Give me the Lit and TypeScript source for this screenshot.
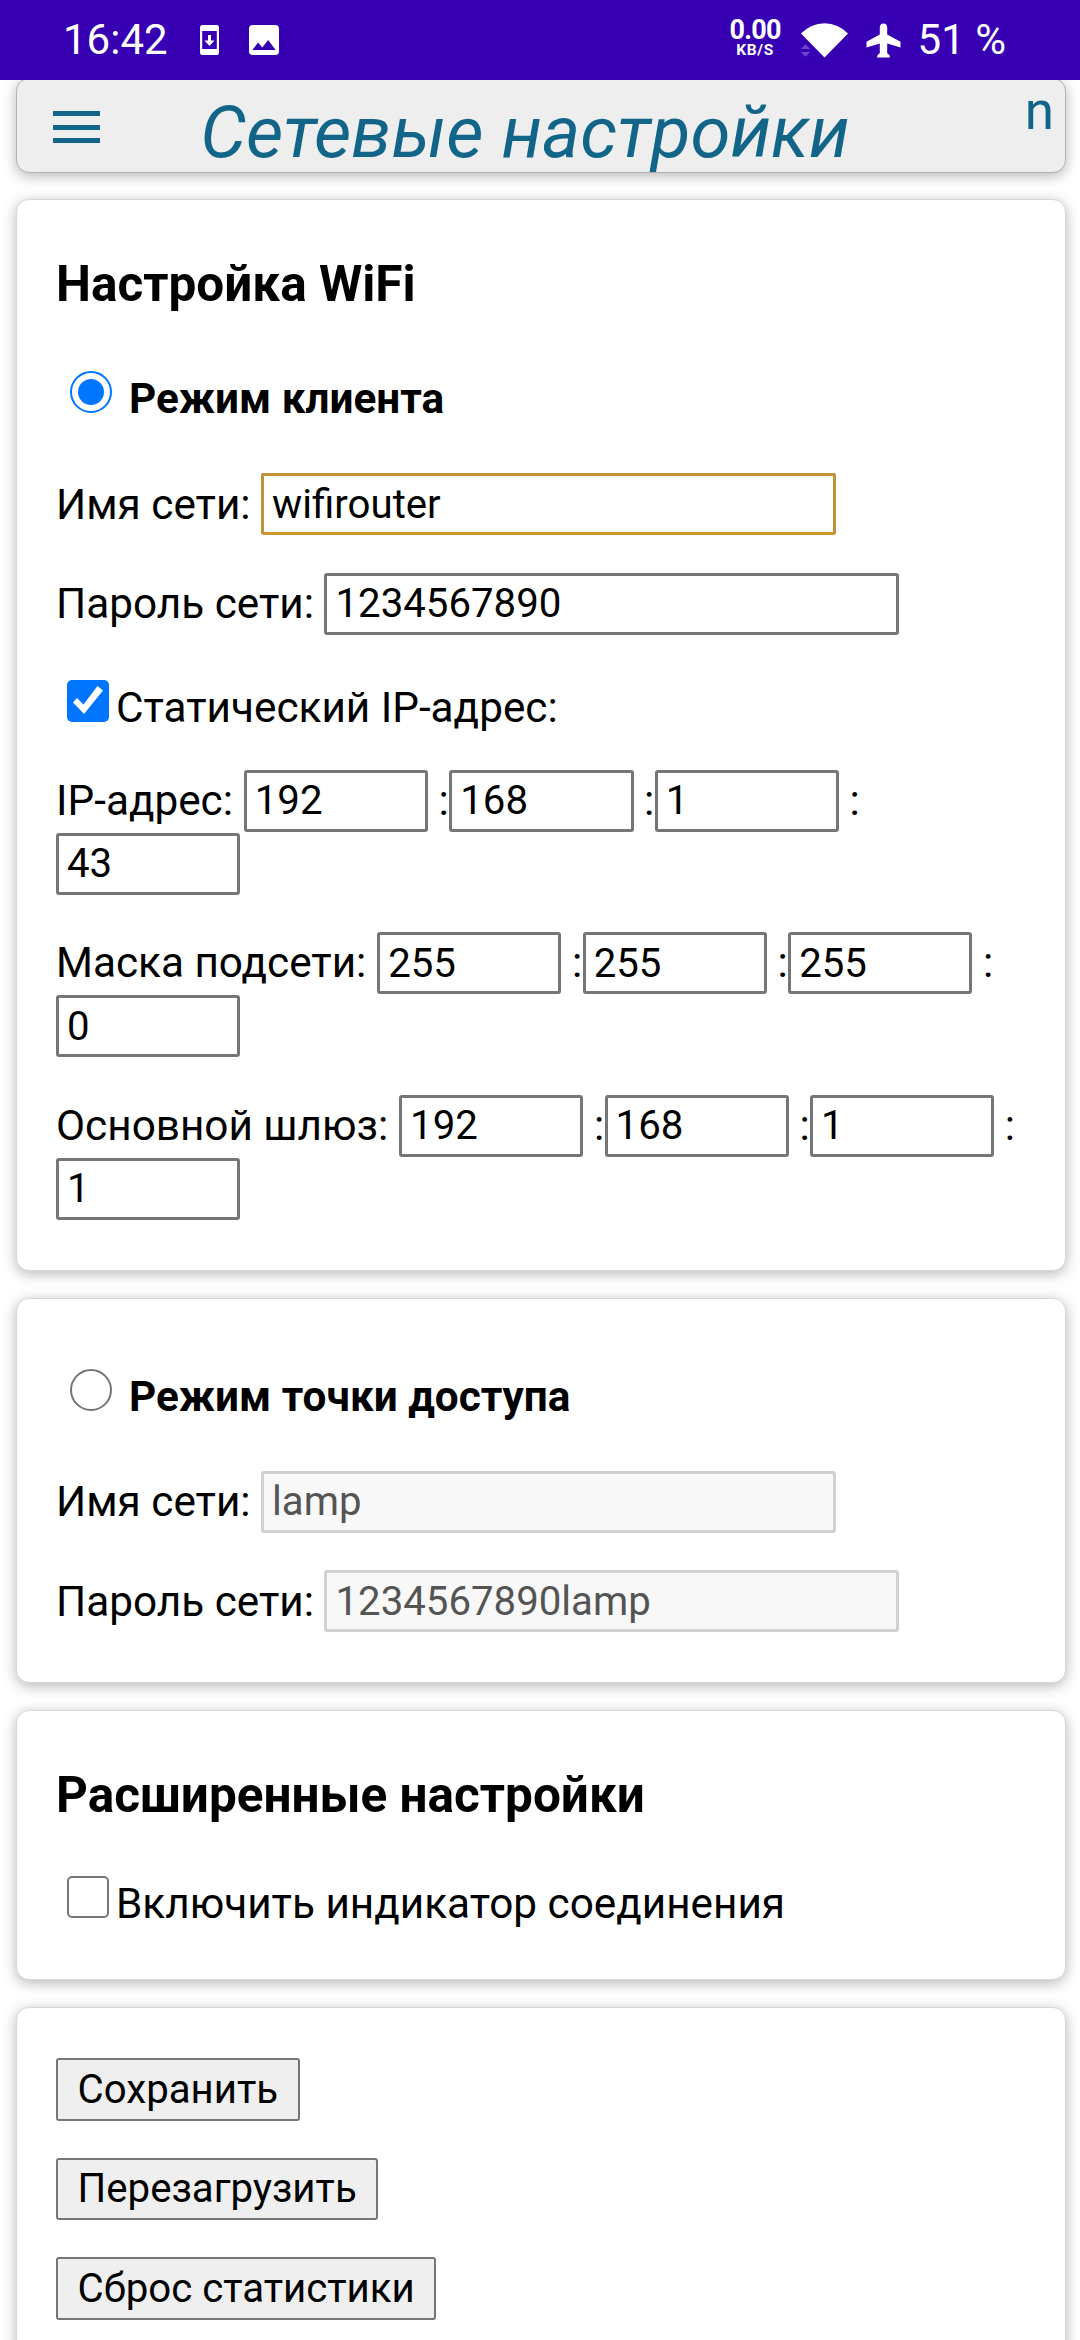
import { LitElement, html, css, nothing } from "lit";
import { customElement, property } from "lit/decorators.js";

@customElement("status-bar")
class StatusBar extends LitElement {
  static styles = css`
    :host {
      display: flex;
      box-sizing: border-box;
      height: 80px;
      padding: 0 74px 0 63px;
      background: #3700b3;
      color: #fff;
      font-size: 42px;
      line-height: 79px;
      position: relative;
      z-index: 1;
    }
    svg {
      display: block;
      flex: none;
      fill: currentColor;
    }
    .clock {
      width: 137px;
    }
    .phone {
      margin: 25px 30px 0 0;
    }
    .photo {
      margin-top: 25px;
    }
    .speed {
      display: flex;
      flex-direction: column;
      align-items: center;
      width: 51px;
      margin-left: auto;
      padding-top: 17px;
      font-weight: 700;
    }
    .rate {
      font-size: 27px;
      line-height: 26px;
      letter-spacing: -0.8px;
    }
    .unit {
      font-size: 15.5px;
      line-height: 14px;
      letter-spacing: 0.7px;
    }
    .wifi {
      margin: 23px 18px 0 20px;
    }
    .faint {
      fill: #7347cd;
    }
    .plane {
      margin: 23px 17px 0 0;
    }
  `;
  render() {
    return html`
      <span class="clock">16:42</span>
      <svg class="phone" width="19" height="30" viewBox="0 0 19 30">
        <path
          fill-rule="evenodd"
          d="M2.5 0h14A2.5 2.5 0 0 1 19 2.5v25a2.5 2.5 0 0 1-2.5 2.5h-14A2.5 2.5 0 0 1 0 27.5v-25A2.5 2.5 0 0 1 2.5 0zM2.2 6v18h14.6V6zM8 10h3v5.5h3.5l-5 5.5-5-5.5H8z"
        />
      </svg>
      <svg class="photo" width="30" height="30" viewBox="3 3 18 18">
        <path
          d="M21 19V5c0-1.1-.9-2-2-2H5c-1.1 0-2 .9-2 2v14c0 1.1.9 2 2 2h14c1.1 0 2-.9 2-2zM8.5 13.5l2.5 3.01L14.5 12l4.5 6H5l3.5-4.5z"
        />
      </svg>
      <span class="speed">
        <span class="rate">0.00</span>
        <span class="unit">KB/S</span>
      </span>
      <svg class="wifi" width="47" height="35" viewBox="0 0 47 35">
        <path d="M0 10.5A32 32 0 0 1 47 10.5L23.5 34.5z" />
        <path class="faint" d="M0 26h9L4.5 21.3zM0 29h9L4.5 33.8z" />
      </svg>
      <svg class="plane" width="35" height="35" viewBox="0 0 35 35">
        <path
          d="M17.5.5c2.2 0 3.7 1.6 3.7 3.7v7.3L34.5 18.8v5.6l-13.3-3.9v9.2c0 1.5 2.6 1.6 2.6 3.2v1.6H11.2v-1.6c0-1.6 2.6-1.7 2.6-3.2v-9.2L.5 24.4v-5.6l13.3-7.3V4.2c0-2.1 1.5-3.7 3.7-3.7z"
        />
      </svg>
      <span>51 %</span>
    `;
  }
}

@customElement("page-header")
class PageHeader extends LitElement {
  static styles = css`
    :host {
      display: grid;
      grid-template-columns: 130px 1fr 162px;
      box-sizing: border-box;
      height: 95px;
      margin: -2px 14px 0 16px;
      border: 1px solid #b0b2b3;
      border-radius: 13px;
      background: #eee;
      box-shadow: 0 3px 14px rgba(0, 0, 0, 0.29);
      color: #126589;
    }
    .menu {
      display: flex;
      flex-direction: column;
      gap: 8.5px;
      width: 47px;
      padding: 32px 0 0 36px;
    }
    .bar {
      height: 5px;
      background: #126589;
    }
    .title {
      margin: 0;
      font-size: 72.5px;
      font-style: italic;
      font-weight: 400;
      line-height: 108px;
      text-align: center;
      white-space: nowrap;
    }
    .tail {
      font-size: 53px;
      line-height: 64px;
      padding-right: 11px;
      text-align: right;
    }
  `;
  render() {
    return html`
      <div class="menu">
        <div class="bar"></div>
        <div class="bar"></div>
        <div class="bar"></div>
      </div>
      <h1 class="title">Сетевые настройки</h1>
      <div class="tail">n</div>
    `;
  }
}

/** A labelled single-line text field. */
@customElement("text-row")
class TextRow extends LitElement {
  static styles = css`
    :host {
      display: flex;
      align-items: center;
      height: 62px;
      line-height: 61px;
      gap: 10.5px;
    }
    .field {
      box-sizing: border-box;
      width: 575px;
      height: 62px;
      margin: 0;
      padding: 0 8px;
      border: 3px solid #767676;
      border-radius: 3px;
      outline: none;
      background: #fff;
      color: #000;
      font: inherit;
      font-size: 40.2px;
      line-height: 56px;
    }
    .active {
      border-color: #c2923a;
      border-bottom-color: #d1952a;
    }
    .field:disabled {
      border-color: #d1d1d1;
      background: #f8f8f8;
      color: #545454;
    }
  `;
  @property() label = "";
  @property() value = "";
  @property({ type: Boolean }) active = false;
  @property({ type: Boolean }) disabled = false;
  render() {
    return html`
      <span>${this.label}</span>
      <input
        class="field ${this.active ? "active" : ""}"
        type="text"
        .value=${this.value}
        ?disabled=${this.disabled}
      />
    `;
  }
}

/** Four octets; the last one wraps onto its own line. */
@customElement("octet-row")
class OctetRow extends LitElement {
  static styles = css`
    :host {
      display: flex;
      flex-wrap: wrap;
      line-height: 61px;
      row-gap: 0.5px;
    }
    .label {
      margin-right: 10.8px;
    }
    .field {
      box-sizing: border-box;
      width: 184.3px;
      height: 62px;
      margin: 0;
      padding: 0 8px;
      border: 3px solid #767676;
      border-radius: 3px;
      background: #fff;
      color: #000;
      font: inherit;
      font-size: 40.2px;
      line-height: 56px;
    }
    .colon {
      width: 10.7px;
      padding-left: 10.5px;
    }
    .break {
      flex-basis: 100%;
    }
  `;
  @property() label = "";
  @property({ type: Array }) octets: string[] = [];
  render() {
    const last = this.octets.length - 1;
    return html`
      <span class="label">${this.label}</span>
      ${this.octets.map(
        (octet, i) => html`
          ${i === last ? html`<span class="break"></span>` : nothing}
          <input class="field" type="text" .value=${octet} />
          ${i < last ? html`<span class="colon">:</span>` : nothing}
        `
      )}
    `;
  }
}

@customElement("app-root")
class AppRoot extends LitElement {
  static styles = css`
    :host {
      display: block;
      height: 2340px;
      overflow: hidden;
      background: #fff;
      color: #000;
      font-family: Roboto, "Liberation Sans", sans-serif;
      font-size: 42.3px;
    }
    .card {
      display: flex;
      flex-direction: column;
      box-sizing: border-box;
      margin: 26px 14px 0 16px;
      padding: 0 39px 50px;
      border: 1px solid #d8d8d8;
      border-radius: 13px;
      background: #fff;
      box-shadow: 0 3px 14px rgba(0, 0, 0, 0.29);
    }
    .heading {
      margin: 51px 0 0;
      font-size: 49.5px;
      font-weight: 700;
      line-height: 66px;
    }
    .choice {
      display: flex;
      align-items: flex-start;
      height: 50px;
      line-height: 56px;
    }
    .mode {
      padding-left: 14px;
      gap: 17px;
      font-weight: 700;
    }
    .option {
      padding-left: 11px;
      gap: 7px;
    }
    .toggle {
      appearance: none;
      flex: none;
      box-sizing: border-box;
      width: 42px;
      height: 42px;
      margin: 0;
      border: 2.5px solid #767676;
      background: #fff;
    }
    .radio {
      border-radius: 50%;
      padding: 6px;
    }
    .radio:checked {
      border-color: #0075ff;
      background: #0075ff content-box;
    }
    .check {
      border-radius: 5px;
    }
    .check:checked {
      border: 0;
      background: #0075ff;
    }
    .check:checked::before {
      content: "";
      display: block;
      width: 42px;
      height: 42px;
      background: #fff;
      clip-path: polygon(6px 23px, 10px 18.5px, 16.5px 25px, 30.5px 6.5px, 36px 11px, 17px 34.5px);
    }
    .label-text {
      height: 50px;
    }
    .client-mode { margin-top: 54px; }
    .client-name { margin-top: 52px; }
    .gap { margin-top: 37.5px; }
    .static-ip { margin-top: 45px; }
    .address { margin-top: 40px; }
    .octets { margin-top: 37.5px; }
    .point-mode { margin-top: 70px; }
    .indicator { margin-top: 48px; }
    .point { margin-top: 27px; }
    .advanced { padding-bottom: 53px; }
    .actions {
      align-items: flex-start;
      gap: 37px;
      padding-top: 50px;
    }
    .button {
      flex: none;
      box-sizing: border-box;
      height: 62.5px;
      margin: 0;
      padding: 1px 19.6px 0;
      border: 2.5px solid #767676;
      border-radius: 3px;
      background: #efefef;
      color: #000;
      font: inherit;
      font-size: 40.2px;
      line-height: 56px;
    }
  `;
  render() {
    return html`
      <status-bar></status-bar>
      <page-header></page-header>

      <section class="card">
        <h2 class="heading">Настройка WiFi</h2>
        <label class="choice mode client-mode">
          <input class="toggle radio" type="radio" name="mode" checked />
          <span class="label-text">Режим клиента</span>
        </label>
        <text-row class="client-name" label="Имя сети:" value="wifirouter" active></text-row>
        <text-row class="gap" label="Пароль сети:" value="1234567890"></text-row>
        <label class="choice option static-ip">
          <input class="toggle check" type="checkbox" checked />
          <span class="label-text">Статический IP-адрес:</span>
        </label>
        <octet-row class="address" label="IP-адрес:" .octets=${["192", "168", "1", "43"]}></octet-row>
        <octet-row class="octets" label="Маска подсети:" .octets=${["255", "255", "255", "0"]}></octet-row>
        <octet-row class="octets" label="Основной шлюз:" .octets=${["192", "168", "1", "1"]}></octet-row>
      </section>

      <section class="card point">
        <label class="choice mode point-mode">
          <input class="toggle radio" type="radio" name="access-mode" />
          <span class="label-text">Режим точки доступа</span>
        </label>
        <text-row class="client-name" label="Имя сети:" value="lamp" disabled></text-row>
        <text-row class="gap" label="Пароль сети:" value="1234567890lamp" disabled></text-row>
      </section>

      <section class="card point advanced">
        <h2 class="heading">Расширенные настройки</h2>
        <label class="choice option indicator">
          <input class="toggle check" type="checkbox" />
          <span class="label-text">Включить индикатор соединения</span>
        </label>
      </section>

      <section class="card point actions">
        <button class="button">Сохранить</button>
        <button class="button">Перезагрузить</button>
        <button class="button">Сброс статистики</button>
      </section>
    `;
  }
}
